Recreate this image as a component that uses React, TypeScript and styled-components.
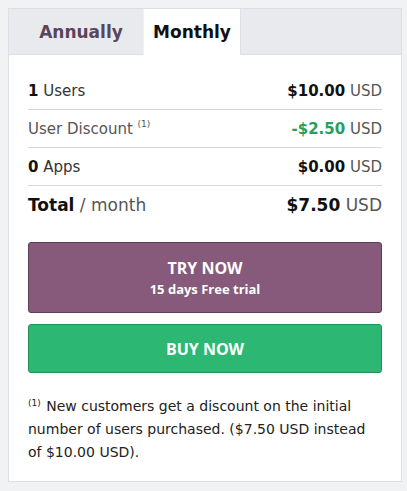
import React from 'react'
import styled, {createGlobalStyle} from 'styled-components'

const GlobalStyle = createGlobalStyle`
  html, body {
    margin: 0;
    padding: 0;
    background: #f1f2f4;
  }
  body {
    padding: 8px 5px 8px 8px;
    font-family: 'DejaVu Sans', 'Open Sans', sans-serif;
  }
`

const Card = styled.div`
  width: 394px;
  background: #fff;
  border: 1px solid #dcdfe4;
  box-sizing: border-box;
`

const TabBar = styled.div`
  display: flex;
  height: 46px;
  background: #e8eaee;
  border-bottom: 1px solid #dcdfe4;
  box-sizing: border-box;
`

const Tab = styled.div<{active?: boolean}>`
  display: flex;
  align-items: center;
  justify-content: center;
  box-sizing: border-box;
  height: 46px;
  font-size: 17px;
  font-weight: 600;
  color: ${p => (p.active ? '#111' : '#5a4658')};
  background: ${p => (p.active ? '#fff' : 'transparent')};
  border-right: 1px solid ${p => (p.active ? '#dcdfe4' : '#eef0f3')};
  width: ${p => (p.active ? '97px' : '135px')};
  padding-left: ${p => (p.active ? '0' : '10px')};
`

const Body = styled.div`
  padding: 17px 19px 17px 19px;
`

const Row = styled.div<{last?: boolean}>`
  display: flex;
  justify-content: space-between;
  align-items: center;
  height: 37px;
  border-bottom: ${p => (p.last ? 'none' : '1px solid #d6d8dc')};
  font-size: ${p => (p.last ? '17px' : '15px')};
  color: #333;
`

const Strong = styled.span`
  font-weight: 700;
  color: #111;
`

const Muted = styled.span`
  color: #555;
  font-weight: 400;
`

const Sup = styled.sup`
  font-size: 9px;
  vertical-align: top;
  line-height: 1;
`

const Amount = styled.span<{green?: boolean}>`
  font-weight: 700;
  color: ${p => (p.green ? '#27a05c' : '#111')};
`

const Buttons = styled.div`
  display: flex;
  flex-direction: column;
  gap: 11px;
  margin-top: 19px;
`

const Button = styled.div<{variant: 'try' | 'buy'}>`
  display: flex;
  flex-direction: column;
  align-items: center;
  justify-content: center;
  box-sizing: border-box;
  height: ${p => (p.variant === 'try' ? '71px' : '49px')};
  border-radius: 3px;
  background: ${p => (p.variant === 'try' ? '#875a7b' : '#2cb872')};
  border: 1px solid ${p => (p.variant === 'try' ? '#5e3f56' : '#218f57')};
  color: #fff;
  font-family: 'Open Sans', 'Liberation Sans', sans-serif;
  font-weight: 700;
`

const ButtonTitle = styled.div`
  font-size: 16px;
  line-height: 22px;
`

const ButtonSub = styled.div`
  font-size: 13px;
  line-height: 20px;
`

const Note = styled.p`
  margin: 22px 0 0 0;
  font-size: 14px;
  line-height: 23px;
  color: #222;
`

const NoteMark = styled.span`
  font-size: 9px;
  line-height: 1;
  vertical-align: 5px;
  margin-right: 1px;
`

export default function App() {
  return (
    <>
      <GlobalStyle />
      <Card>
        <TabBar>
          <Tab>Annually</Tab>
          <Tab active>Monthly</Tab>
        </TabBar>
        <Body>
          <Row>
            <span>
              <Strong>1</Strong> Users
            </span>
            <span>
              <Amount>$10.00</Amount> <Muted>USD</Muted>
            </span>
          </Row>
          <Row>
            <Muted>
              User Discount <Sup>(1)</Sup>
            </Muted>
            <span>
              <Amount green>-$2.50</Amount> <Muted>USD</Muted>
            </span>
          </Row>
          <Row>
            <span>
              <Strong>0</Strong> Apps
            </span>
            <span>
              <Amount>$0.00</Amount> <Muted>USD</Muted>
            </span>
          </Row>
          <Row last>
            <span>
              <Strong>Total</Strong> <Muted>/ month</Muted>
            </span>
            <span>
              <Amount>$7.50</Amount> <Muted>USD</Muted>
            </span>
          </Row>
          <Buttons>
            <Button variant="try">
              <ButtonTitle>TRY NOW</ButtonTitle>
              <ButtonSub>15 days Free trial</ButtonSub>
            </Button>
            <Button variant="buy">
              <ButtonTitle>BUY NOW</ButtonTitle>
            </Button>
          </Buttons>
          <Note>
            <NoteMark>(1)</NoteMark> New customers get a discount on the initial number of users purchased. ($7.50 USD
            instead of $10.00 USD).
          </Note>
        </Body>
      </Card>
    </>
  )
}
